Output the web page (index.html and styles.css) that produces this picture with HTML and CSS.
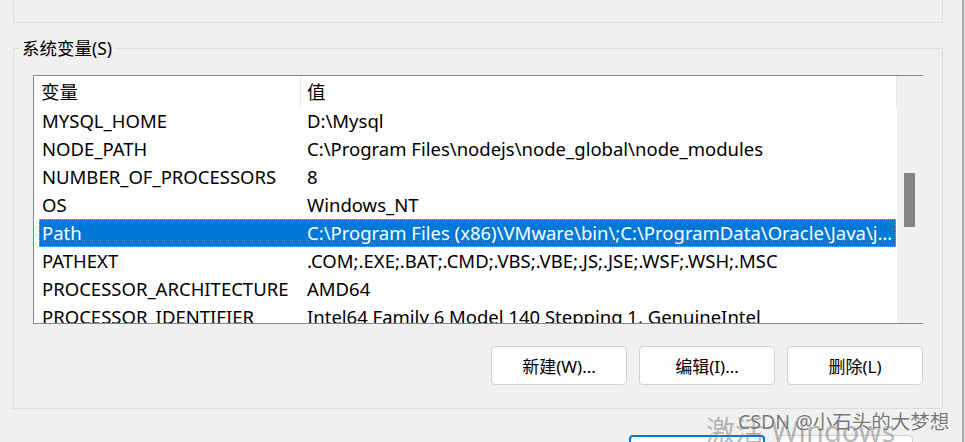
FILE: index.html
```html
<!DOCTYPE html>
<html lang="zh-CN">
<head>
<meta charset="utf-8">
<title>系统变量</title>
<link rel="stylesheet" href="styles.css">
</head>
<body>
<div class="screen">
  <div class="main">
    <div class="user-group"></div>
    <fieldset class="sys-group">
      <legend>系统变量(S)</legend>
      <div class="listbox">
        <div class="list">
          <div class="header">
            <div class="h1">变量</div>
            <div class="h2">值</div>
          </div>
          <div class="row"><div class="c1">MYSQL_HOME</div><div class="c2">D:\Mysql</div></div>
          <div class="row"><div class="c1">NODE_PATH</div><div class="c2">C:\Program Files\nodejs\node_global\node_modules</div></div>
          <div class="row"><div class="c1">NUMBER_OF_PROCESSORS</div><div class="c2">8</div></div>
          <div class="row"><div class="c1">OS</div><div class="c2">Windows_NT</div></div>
          <div class="row selected"><div class="c1">Path</div><div class="c2">C:\Program Files (x86)\VMware\bin\;C:\ProgramData\Oracle\Java\javapath;C:\Windows\system32</div></div>
          <div class="row"><div class="c1">PATHEXT</div><div class="c2">.COM;.EXE;.BAT;.CMD;.VBS;.VBE;.JS;.JSE;.WSF;.WSH;.MSC</div></div>
          <div class="row"><div class="c1">PROCESSOR_ARCHITECTURE</div><div class="c2">AMD64</div></div>
          <div class="row"><div class="c1">PROCESSOR_IDENTIFIER</div><div class="c2">Intel64 Family 6 Model 140 Stepping 1, GenuineIntel</div></div>
        </div>
        <div class="vscroll"><div class="thumb"></div></div>
      </div>
      <div class="btns">
        <button class="btn">新建(W)...</button>
        <button class="btn">编辑(I)...</button>
        <button class="btn">删除(L)</button>
      </div>
    </fieldset>
    <div class="dialog-btns">
      <button class="btn primary">确定</button>
      <button class="btn">取消</button>
    </div>
  </div>
  <div class="edge"></div>
  <div class="wm-activate">激活 Windows</div>
  <div class="wm-csdn">CSDN @小石头的大梦想</div>
</div>
</body>
</html>
```

FILE: styles.css
```css
html, body {
  margin: 0;
  padding: 0;
  background: #f0f0f0;
}

.screen {
  position: relative;
  width: 965px;
  height: 442px;
  overflow: hidden;
  display: flex;
  background: #f0f0f0;
  font-family: "Noto Sans", "Noto Sans CJK SC", sans-serif;
  font-size: 17px;
  color: #000;
}

.main {
  width: 962px;
  flex: none;
}

.edge {
  width: 3px;
  flex: none;
  border-left: 2px solid #a9a9a9;
  box-sizing: border-box;
  background: #e4e4e4;
}

.user-group {
  box-sizing: border-box;
  margin-left: 13px;
  width: 930px;
  height: 23px;
  border: 1px solid #dcdcdc;
  border-top: none;
}

.sys-group {
  box-sizing: border-box;
  margin: 15px 0 0 13px;
  width: 930px;
  padding: 17px 19px 23px 19px;
  border: 1px solid #dcdcdc;
  min-inline-size: 0;
}

.sys-group legend {
  padding: 0 3px;
  margin-left: -14px;
  line-height: 20px;
  font-size: 17.5px;
  color: #000;
}

.listbox {
  box-sizing: border-box;
  height: 249px;
  border: 1px solid #828790;
  display: flex;
  background: #fff;
}

.list {
  width: 863px;
  flex: none;
  overflow: hidden;
  background: #fff;
  font-size: 18.5px;
}

.header {
  display: flex;
  height: 31px;
  line-height: 31px;
}

.h1 {
  width: 266px;
  box-sizing: border-box;
  padding-left: 7px;
  flex: none;
}

.h2 {
  flex: 1;
  padding-left: 6px;
  border-left: 1px solid #e5e5e5;
  border-right: 1px solid #e5e5e5;
}

.row {
  display: flex;
  margin-left: 5px;
  width: 857px;
  height: 28px;
  line-height: 27px;
  white-space: nowrap;
}

.c1 {
  width: 261px;
  flex: none;
  box-sizing: border-box;
  padding-left: 3px;
  overflow: hidden;
}

.c2 {
  flex: 1;
  min-width: 0;
  padding-left: 7px;
  overflow: hidden;
  text-overflow: ellipsis;
}

.row.selected {
  background: #0078d7;
  color: #fff;
  outline: 1px dotted #f2a33a;
  outline-offset: -1px;
}

.vscroll {
  width: 26px;
  flex: none;
  background: #f0f0f0;
  padding-top: 97px;
  box-sizing: border-box;
}

.thumb {
  margin-left: 7px;
  width: 11px;
  height: 54px;
  background: #858585;
}

.btns {
  display: flex;
  justify-content: flex-end;
  gap: 12px;
  margin-top: 22px;
}

.btn {
  box-sizing: border-box;
  width: 136px;
  height: 39px;
  border: 1px solid #d0d0d0;
  border-radius: 4px;
  background: #fdfdfd;
  font-family: "Noto Sans", "Noto Sans CJK SC", sans-serif;
  font-size: 17px;
  color: #000;
  padding: 0;
}

.dialog-btns {
  display: flex;
  justify-content: flex-end;
  gap: 12px;
  margin-top: 26px;
  margin-right: 49px;
}

.btn.primary {
  border: 2px solid #0078d7;
}

.wm-activate {
  position: absolute;
  left: 706px;
  top: 414px;
  font-size: 29px;
  line-height: 34px;
  color: rgba(125, 125, 125, 0.55);
  white-space: nowrap;
}

.wm-csdn {
  position: absolute;
  left: 738px;
  top: 409px;
  font-size: 19.5px;
  line-height: 26px;
  color: rgba(95, 95, 95, 0.85);
  text-shadow: 0 0 2px rgba(255, 255, 255, 0.9);
  white-space: nowrap;
}
```
